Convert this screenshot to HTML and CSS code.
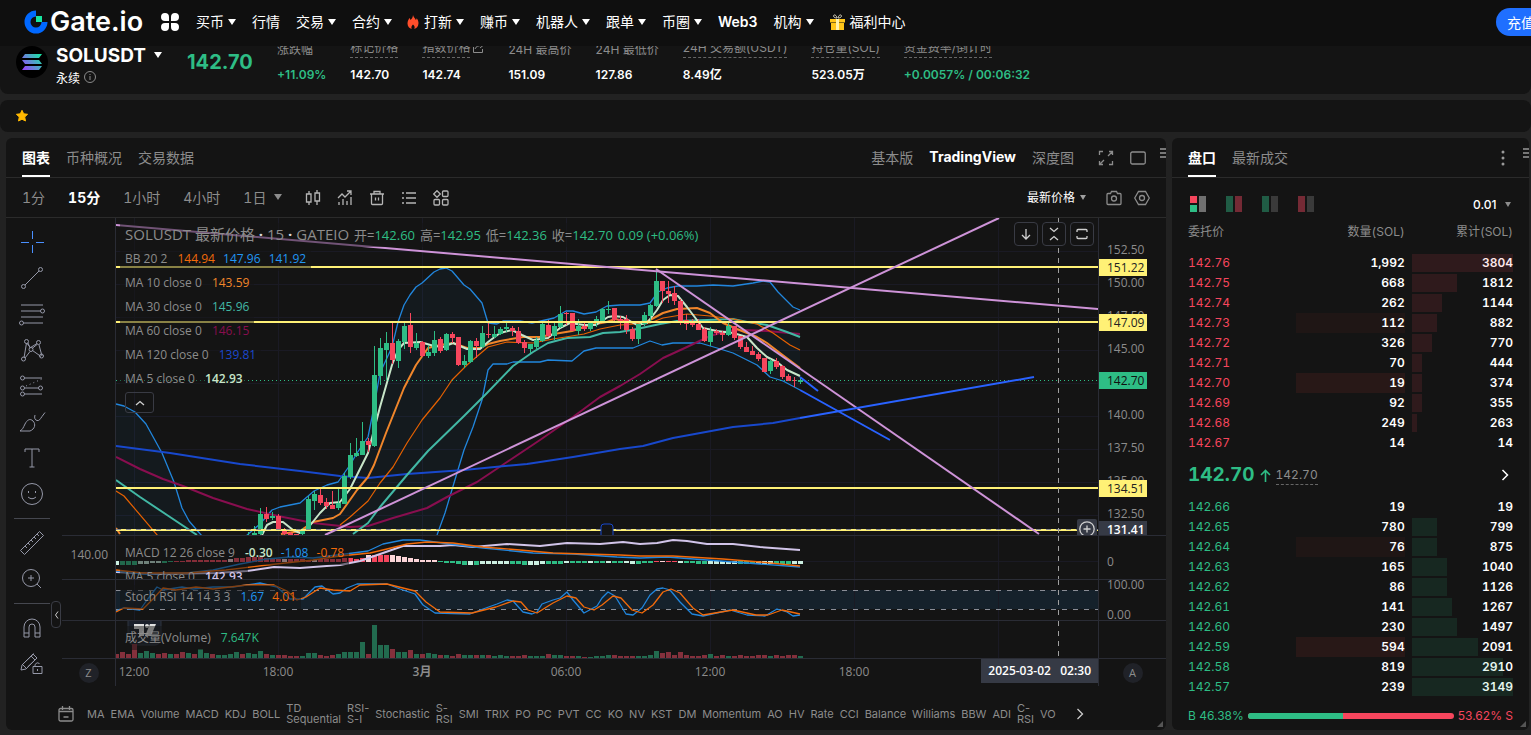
FILE: index.html
```html
<!DOCTYPE html>
<html lang="zh-CN">
<head>
    <meta charset="UTF-8">
    <meta name="viewport" content="width=device-width, initial-scale=1.0">
    <title>SOLUSDT 永续 - Gate.io</title>
    <link rel="stylesheet" href="styles.css">
</head>
<body>
    <header class="topbar">
        <a class="logo" href="#">
            <svg width="24" height="24" viewBox="0 0 24 24"><path d="M12 3.500A8.500 8.500 0 1 0 20.500 12" fill="none" stroke="#0068ff" stroke-width="6"/><path d="M12 6h6v6h-6z" fill="#17e6a1"/></svg>
            <span>Gate.io</span>
        </a>
        <button class="apps" type="button" aria-label="Apps">
            <svg width="18" height="18" viewBox="0 0 18 18" fill="#fff"><path d="M4 0a4 4 0 0 1 4 4v4H4a4 4 0 0 1 0-8zM14 0a4 4 0 0 1 0 8h-4V4a4 4 0 0 1 4-4zM4 10h4v4a4 4 0 1 1-4-4zM10 10h4a4 4 0 1 1-4 4z"/></svg>
        </button>
        <nav class="nav">
            <a class="menu" href="#">买币</a>
            <a href="#">行情</a>
            <a class="menu" href="#">交易</a>
            <a class="menu" href="#">合约</a>
            <a class="menu" href="#"><svg class="fire" width="12" height="14" viewBox="0 0 12 14"><path d="M6 0c.4 2.500 2.300 3.300 2.800 5 .6-.4.900-1 .9-1.700C11 4.800 11.500 6.500 11.500 8.200c0 3.200-2.200 5.300-4.200 5.700.8-1.500.2-3.200-1.300-4.300-1.400 1.100-2 2.800-1.300 4.300C2.500 13.400.5 11.400.5 8.400.5 6 1.800 4.700 2.200 3.100c.8.500 1.200 1.200 1.300 2C4.900 3.900 5.900 2.100 6 0z" fill="#ff4e2b"/></svg>打新</a>
            <a class="menu" href="#">赚币</a>
            <a class="menu" href="#">机器人</a>
            <a class="menu" href="#">跟单</a>
            <a class="menu" href="#">币圈</a>
            <a class="latin" href="#">Web3</a>
            <a class="menu" href="#">机构</a>
            <a href="#"><svg class="gift" width="15" height="16" viewBox="0 0 15 16"><path d="M7 4C4.500 4 3 2.700 3.700 1.400 4.800 0 6.800 2 7 4zm1 0c2.500 0 4-1.300 3.300-2.600C10.200 0 8.200 2 8 4z" fill="none" stroke="#d8d3c0"/><path d="M0 5h15v3.500H0zM1 9h13v7H1z" fill="#ffc61a"/><path d="M6 5h3v11H6z" fill="#fff2ac"/></svg>福利中心</a>
        </nav>
        <button class="deposit" type="button">充值</button>
    </header>

    <section class="ticker">
        <svg class="coin" width="32" height="32" viewBox="0 0 32 32">
            <defs><linearGradient id="sol" x1="6" y1="24" x2="26" y2="8" gradientUnits="userSpaceOnUse"><stop offset="0" stop-color="#a13bff"/><stop offset="1" stop-color="#12f0a0"/></linearGradient></defs>
            <circle cx="16" cy="16" r="16" fill="#000"/>
            <path d="M9 8h17l-3 4H6zM6 14h17l3 4H9zM9 20h17l-3 4H6z" fill="url(#sol)"/>
        </svg>
        <div class="pair">
            <button class="pair-name menu" type="button">SOLUSDT</button>
            <span class="pair-type">永续 <svg width="12" height="12" viewBox="0 0 12 12" fill="none" stroke="#8c8c8c"><circle cx="6" cy="6" r="5.500"/><path d="M6 5v4M6 3v1"/></svg></span>
        </div>
        <strong class="last-price">142.70</strong>
        <dl class="stats">
            <div><dt>涨跌幅</dt><dd class="up">+11.09%</dd></div>
            <div><dt class="hint">标记价格</dt><dd>142.70</dd></div>
            <div><dt><span class="hint">指数价格</span> <svg width="11" height="10" viewBox="0 0 11 10" fill="none" stroke="#8c8c8c"><path d="M.5 4v5.500h9V6M2 6c1-3 4-3.500 7-3.500M7 0l3 2.500L7 5"/></svg></dt><dd>142.74</dd></div>
            <div><dt>24H 最高价</dt><dd>151.09</dd></div>
            <div><dt>24H 最低价</dt><dd>127.86</dd></div>
            <div><dt class="hint">24H 交易额(USDT)</dt><dd>8.49亿</dd></div>
            <div><dt class="hint">持仓量(SOL)</dt><dd>523.05万</dd></div>
            <div><dt><span class="hint">资金费率/倒计时</span></dt><dd class="up">+0.0057% / 00:06:32</dd></div>
        </dl>
    </section>

    <section class="favorites">
        <svg width="12" height="12" viewBox="0 0 12 12"><path d="M6 .3l1.700 3.500 3.900.5-2.900 2.700.8 4L6 9.200 2.500 11l.8-4L.4 4.300l3.900-.5z" fill="#ffb800" stroke="#ffb800" stroke-linejoin="round"/></svg>
    </section>

    <main class="workspace">
        <section class="panel chart-panel">
            <div class="panel-head">
                <div class="tabs">
                    <button class="tab active" type="button">图表</button>
                    <button class="tab" type="button">币种概况</button>
                    <button class="tab" type="button">交易数据</button>
                </div>
                <div class="tabs">
                    <button class="tab" type="button">基本版</button>
                    <button class="tab selected" type="button">TradingView</button>
                    <button class="tab" type="button">深度图</button>
                </div>
                <div class="window-tools">
                    <button type="button" aria-label="Fullscreen"><svg width="16" height="16" viewBox="0 0 16 16"><path d="M1.500 5V1.500H5M11 1.500h3.500V5M14.500 11v3.500H11M5 14.500H1.500V11M10 6l4-4M6 10l-4 4"/></svg></button>
                    <button type="button" aria-label="Layout"><svg width="16" height="14" viewBox="0 0 16 14"><rect x=".75" y="1" width="14.500" height="12" rx="1.500"/></svg></button>
                </div>
                <span class="drag"></span>
            </div>

            <div class="toolbar">
                <button class="period" type="button">1分</button>
                <button class="period active" type="button">15分</button>
                <button class="period" type="button">1小时</button>
                <button class="period" type="button">4小时</button>
                <button class="period menu" type="button">1日</button>
                <div class="toolbar-icons">
                    <button type="button" aria-label="Candles"><svg width="16" height="16" viewBox="0 0 16 16"><path d="M4 1v3M4 12v3M12 0v3M12 11v4M1.500 4h4.500v8H1.500zM10 3h4.500v8H10z"/></svg></button>
                    <button type="button" aria-label="Indicators"><svg width="16" height="16" viewBox="0 0 16 16"><path d="M1 8l4-4 3 3 6-6M10 1h4v4M2 15v-3M6 15V9M10 15v-4M14 15V7"/></svg></button>
                    <button type="button" aria-label="Delete"><svg width="16" height="16" viewBox="0 0 16 16"><path d="M1 4h14M5 4V1.500h6V4M2.500 4v9.500q0 1 1 1h9q1 0 1-1V4M6.500 7.500v3M9.500 7.500v3"/></svg></button>
                    <button type="button" aria-label="Objects"><svg width="16" height="16" viewBox="0 0 16 16"><path d="M5 3h10M5 8h10M5 13h10M1 3h2M1 8h2M1 13h2"/></svg></button>
                    <button type="button" aria-label="Layouts"><svg width="16" height="16" viewBox="0 0 16 16"><path d="M4 .7L7.300 4 4 7.300.7 4z"/><rect x="9.500" y="1" width="5.500" height="5.500" rx="1"/><rect x="1" y="9.500" width="5.500" height="5.500" rx="1"/><rect x="9.500" y="9.500" width="5.500" height="5.500" rx="1"/></svg></button>
                </div>
                <label class="price-source"><select aria-label="Price source"><option>最新价格</option></select></label>
                <div class="toolbar-icons dim">
                    <button type="button" aria-label="Snapshot"><svg width="16" height="16" viewBox="0 0 16 16"><path d="M2 3.500h2.500L5.500 1.500h5l1 2H14q1 0 1 1v9q0 1-1 1H2q-1 0-1-1v-9q0-1 1-1z"/><circle cx="8" cy="8.500" r="2.500"/></svg></button>
                    <button type="button" aria-label="Settings"><svg width="16" height="16" viewBox="0 0 16 16"><path d="M4.500 1.500h7L15.300 8l-3.800 6.500h-7L.7 8z"/><circle cx="8" cy="8" r="2.500"/></svg></button>
                </div>
            </div>

            <div class="chart-body">
                <div class="draw-tools">
                    <button type="button" aria-label="Cross" class="on"><svg viewBox="0 0 28 28"><path d="M14.500 3v8M14.500 17v8M3 14.500h8M18 14.500h8"/></svg></button>
                    <button type="button" aria-label="Trend line"><svg viewBox="0 0 28 28"><path d="M7 21L21 7"/><circle cx="5.500" cy="22.500" r="2"/><circle cx="22.500" cy="5.500" r="2"/></svg></button>
                    <button type="button" aria-label="Fib retracement"><svg viewBox="0 0 28 28"><path d="M3 5h22M3 11h19.500M3 17h22M5.500 23H25"/><circle cx="24.500" cy="11" r="2"/><circle cx="3.500" cy="23" r="2"/></svg></button>
                    <button type="button" aria-label="Pattern"><svg viewBox="0 0 28 28"><path d="M6 22L8.500 7l4 4.500L19 7.500M21 9l3 11M7 22l5-6.500M14.500 14.500l8.500 6M14 12.500l5-4M10 7l2 5"/><circle cx="8.500" cy="5.500" r="2"/><circle cx="20.500" cy="6.500" r="2"/><circle cx="13" cy="13.500" r="2"/><circle cx="5.500" cy="23" r="2"/><circle cx="23.500" cy="20" r="2"/></svg></button>
                    <button type="button" aria-label="Projection"><svg viewBox="0 0 28 28"><path d="M6.500 6H24M6.500 16h14M6.500 22H24"/><path d="M8 14L24 7" stroke-dasharray="1 3"/><circle cx="4.500" cy="6" r="2"/><circle cx="4.500" cy="16" r="2"/><circle cx="22.500" cy="16" r="2"/><circle cx="4.500" cy="22" r="2"/></svg></button>
                    <button type="button" aria-label="Brush"><svg viewBox="0 0 28 28"><path d="M2 23h10c5-2 6-7 3-10s-6-1-8 3-2 5-5 7zM17 7c-1 3 0 5 2 5.500s3-1 5-4l3-4"/></svg></button>
                    <button type="button" aria-label="Text"><svg viewBox="0 0 28 28"><path d="M7 8V5h14v3M14 5v18M11.500 23h5"/></svg></button>
                    <button type="button" aria-label="Emoji"><svg viewBox="0 0 28 28"><circle cx="14" cy="14" r="10.500"/><path d="M10.500 11v2M17.500 11v2M10 17q4 3.500 8 0"/></svg></button>
                    <hr>
                    <button type="button" aria-label="Measure"><svg viewBox="0 0 28 28"><path d="M2.500 21.500l19-19 4 4-19 19zM7 17l2 2M10 14l2 2M13 11l2 2M16 8l2 2M19 5l2 2"/></svg></button>
                    <button type="button" aria-label="Zoom"><svg viewBox="0 0 28 28"><circle cx="13" cy="13" r="8.500"/><path d="M19 19l4 4M13 10v6M10 13h6"/></svg></button>
                    <hr>
                    <button type="button" aria-label="Magnet"><svg viewBox="0 0 28 28"><path d="M6 23V13a8 8 0 0 1 16 0v10h-5V13a3 3 0 0 0-6 0v10zM6 19h5M17 19h5"/></svg></button>
                    <button type="button" aria-label="Lock drawing"><svg viewBox="0 0 28 28"><path d="M3 20l1-5L15 4l4 4L8 19zM5 15l3 3M6 13L16 3.500M13 6l4 4M9.500 17L18 9"/><path d="M15 16.500h9v7h-9zM17 16.500v-2q2-3 4.500-1M19.500 19v2"/></svg></button>
                    <button type="button" class="collapse" aria-label="Hide toolbar"><svg width="5" height="8" viewBox="0 0 5 8"><path d="M4 0.500L1.500 4 4 7.500"/></svg></button>
                </div>

                <div class="panes">
                    <div class="pane">
                        <div class="axis-left"></div>
                        <div class="plot">
                            <svg class="canvas main-canvas" id="mainPlot"></svg>
                            <div class="legend">
                                <div class="legend-title">SOLUSDT 最新价格 <b>·</b> 15 <b>·</b> GATEIO <small>开=<i>142.60</i></small> <small>高=<i>142.95</i></small> <small>低=<i>142.36</i></small> <small>收=<i>142.70</i></small> <small><i>0.09 (+0.06%)</i></small></div>
                                <div class="legend-row">BB 20 2 <span class="c-mid">144.94</span> <span class="c-blue">147.96</span> <span class="c-blue">141.92</span></div>
                                <div class="legend-row">MA 10 close 0 <span class="c-ma10">143.59</span></div>
                                <div class="legend-row">MA 30 close 0 <span class="c-ma30">145.96</span></div>
                                <div class="legend-row">MA 60 close 0 <span class="c-ma60">146.15</span></div>
                                <div class="legend-row">MA 120 close 0 <span class="c-ma120">139.81</span></div>
                                <div class="legend-row">MA 5 close 0 <span class="c-ma5">142.93</span></div>
                                <button class="legend-toggle" type="button" aria-label="Collapse legend"><svg width="10" height="6" viewBox="0 0 10 6"><path d="M1 5l4-3.500L9 5"/></svg></button>
                            </div>
                            <div class="pane-buttons">
                                <button type="button" aria-label="Move pane down"><svg width="14" height="14" viewBox="0 0 14 14"><path d="M7 2v10M3 8l4 4 4-4"/></svg></button>
                                <button type="button" aria-label="Collapse pane"><svg width="14" height="14" viewBox="0 0 14 14"><path d="M3 1l4 3.500L11 1M3 13l4-3.500 4 3.500"/></svg></button>
                                <button type="button" aria-label="Maximize pane"><svg width="14" height="14" viewBox="0 0 14 14"><path d="M2 5V3.500q0-1 1-1h8q1 0 1 1V5M2 9v1.500q0 1 1 1h8q1 0 1-1V9"/></svg></button>
                            </div>
                            <button class="add-alert" type="button" aria-label="Add"><svg width="16" height="16" viewBox="0 0 16 16"><circle cx="8" cy="8" r="7.200"/><path d="M8 4.500v7M4.500 8h7"/></svg></button>
                        </div>
                        <svg class="axis-right main-canvas" id="mainAxis"></svg>
                    </div>
                    <div class="pane">
                        <div class="axis-left">140.00</div>
                        <div class="plot">
                            <svg class="canvas macd-canvas" id="macdPlot"></svg>
                            <div class="legend">
                                <div class="legend-row">MACD 12 26 close 9 <span class="c-ma5">-0.30</span> <span class="c-blue">-1.08</span> <span class="c-mid">-0.78</span></div>
                                <div class="legend-row">MA 5 close 0 <span class="c-purple">142.93</span></div>
                            </div>
                        </div>
                        <svg class="axis-right macd-canvas"><text x="8" y="30">0</text></svg>
                    </div>
                    <div class="pane">
                        <div class="axis-left"></div>
                        <div class="plot">
                            <svg class="canvas stoch-canvas" id="stochPlot"></svg>
                            <div class="legend">
                                <div class="legend-row">Stoch RSI 14 14 3 3 <span class="c-blue">1.67</span> <span class="c-mid">4.01</span></div>
                            </div>
                        </div>
                        <svg class="axis-right stoch-canvas"><text x="8" y="9">100.00</text><text x="8" y="39">0.00</text></svg>
                    </div>
                    <div class="pane">
                        <div class="axis-left"></div>
                        <div class="plot">
                            <svg class="canvas volume-canvas" id="volumePlot"></svg>
                            <div class="legend">
                                <div class="legend-row">成交量(Volume) <span class="c-up">7.647K</span></div>
                            </div>
                        </div>
                        <svg class="axis-right volume-canvas"></svg>
                    </div>
                    <div class="pane time-pane">
                        <div class="axis-left"><button class="round" type="button">Z</button></div>
                        <div class="plot">
                            <svg class="canvas time-canvas" id="timeAxis"></svg>
                            <div class="time-cursor">2025-03-02 &nbsp; 02:30</div>
                        </div>
                        <div class="axis-right"><button class="round" type="button">A</button></div>
                    </div>
                </div>
            </div>

            <div class="indicators">
                <button class="calendar" type="button" aria-label="Date range"><svg width="16" height="16" viewBox="0 0 16 16"><rect x="1" y="2.500" width="14" height="12.500" rx="1.500"/><path d="M1 5.500h14M4.500 0v4M11.500 0v4M5.500 11h5"/></svg></button>
                <button type="button">MA</button>
                <button type="button">EMA</button>
                <button type="button">Volume</button>
                <button type="button">MACD</button>
                <button type="button">KDJ</button>
                <button type="button">BOLL</button>
                <button type="button">TD<br>Sequential</button>
                <button type="button">RSI-<br>S-I</button>
                <button type="button">Stochastic</button>
                <button type="button">S-<br>RSI</button>
                <button type="button">SMI</button>
                <button type="button">TRIX</button>
                <button type="button">PO</button>
                <button type="button">PC</button>
                <button type="button">PVT</button>
                <button type="button">CC</button>
                <button type="button">KO</button>
                <button type="button">NV</button>
                <button type="button">KST</button>
                <button type="button">DM</button>
                <button type="button">Momentum</button>
                <button type="button">AO</button>
                <button type="button">HV</button>
                <button type="button">Rate</button>
                <button type="button">CCI</button>
                <button type="button">Balance</button>
                <button type="button">Williams</button>
                <button type="button">BBW</button>
                <button type="button">ADI</button>
                <button type="button">C-<br>RSI</button>
                <button type="button">VO</button>
                <button class="more" type="button" aria-label="More"><svg width="8" height="12" viewBox="0 0 8 12"><path d="M1.500 1l5 5-5 5"/></svg></button>
            </div>
            <span class="resize"></span>
        </section>

        <section class="panel book-panel">
            <div class="panel-head">
                <div class="tabs">
                    <button class="tab active" type="button">盘口</button>
                    <button class="tab" type="button">最新成交</button>
                </div>
                <button class="dots" type="button" aria-label="More"><svg width="4" height="16" viewBox="0 0 4 16" fill="#9a9a9a"><circle cx="2" cy="2" r="1.500"/><circle cx="2" cy="8" r="1.500"/><circle cx="2" cy="14" r="1.500"/></svg></button>
                <span class="drag"></span>
            </div>
            <div class="book-tools">
                <button type="button" aria-label="Both"><svg width="16" height="16"><path d="M0 0h7v7H0z" fill="#f6465d"/><path d="M0 9h7v7H0z" fill="#2ebd85"/><path d="M9 0h7v16H9z" fill="#707070"/></svg></button>
                <button type="button" aria-label="Side by side"><svg width="16" height="16"><path d="M0 0h7v16H0z" fill="#205c45"/><path d="M9 0h7v16H9z" fill="#752a35"/></svg></button>
                <button type="button" aria-label="Bids"><svg width="16" height="16"><path d="M0 0h7v16H0z" fill="#205c45"/><path d="M9 0h7v16H9z" fill="#3a3a3a"/></svg></button>
                <button type="button" aria-label="Asks"><svg width="16" height="16"><path d="M0 0h7v16H0z" fill="#752a35"/><path d="M9 0h7v16H9z" fill="#3a3a3a"/></svg></button>
                <label class="step"><select aria-label="Price step"><option>0.01</option></select></label>
            </div>
            <table class="book">
                <thead><tr><th>委托价</th><th>数量(SOL)</th><th>累计(SOL)</th></tr></thead>
                <tbody class="asks" id="asks"></tbody>
                <tbody>
                    <tr class="spread">
                        <td colspan="3">
                            <div class="spread-line">
                                <strong>142.70</strong>
                                <svg width="11" height="13" viewBox="0 0 11 13" fill="none" stroke="#2ebd85" stroke-width="1.600"><path d="M5.500 13V1.500M1 6l4.500-4.500L10 6"/></svg>
                                <span class="mark">142.70</span>
                                <svg class="go" width="8" height="12" viewBox="0 0 8 12" fill="none" stroke="#fff" stroke-width="1.500"><path d="M1.500 1l5 5-5 5"/></svg>
                            </div>
                        </td>
                    </tr>
                </tbody>
                <tbody class="bids" id="bids"></tbody>
            </table>
            <div class="ratio">
                <span class="up">B 46.38%</span>
                <div class="ratio-bar"><div class="ratio-buy" style="width: 46.38%"></div></div>
                <span class="down">53.62% S</span>
            </div>
            <span class="resize"></span>
        </section>
    </main>

    <script src="script.js"></script>
</body>
</html>
```

FILE: styles.css
```css
* {
    box-sizing: border-box;
}

body {
    margin: 0;
    background: #222;
    color: #fff;
    font-family: Inter, "Noto Sans CJK SC", sans-serif;
    font-size: 12px;
    overflow-x: hidden;
}

button, select {
    margin: 0;
    padding: 0;
    border: 0;
    background: none;
    color: inherit;
    font: inherit;
    cursor: pointer;
}

select {
    appearance: none;
    outline: none;
}

a {
    color: inherit;
    text-decoration: none;
}

svg {
    display: block;
    flex: none;
}

.up { color: #2ebd85; }
.down { color: #f6465d; }

/* small triangle behind anything that opens a list */
.menu::after,
.price-source::after,
.step::after {
    content: '';
    display: inline-block;
    flex: none;
    border: 4px solid transparent;
    border-top: 6px solid currentColor;
    border-bottom: 0;
    margin-left: 4px;
}

/* top bar */
.topbar {
    position: relative;
    z-index: 2;
    display: flex;
    align-items: center;
    height: 46px;
    padding: 0 0 2px 24px;
    background: #0f0f0f;
    overflow: hidden;
}

.logo {
    display: flex;
    align-items: center;
    gap: 2px;
    width: 121px;
    font-size: 27px;
    font-weight: 600;
    line-height: 44px;
}

.apps {
    margin: 0 17px 0 16px;
}

.nav {
    display: flex;
    gap: 16px;
    flex: 1;
    font-size: 14px;
    line-height: 44px;
    white-space: nowrap;
}

.nav a {
    display: flex;
    align-items: center;
}

.nav .latin {
    font-weight: 600;
}

.fire {
    margin-right: 5px;
    margin-left: -1px;
}

.gift {
    margin-right: 5px;
}

.deposit {
    flex: none;
    height: 28px;
    margin-right: -16px;
    padding: 0 12px 0 11px;
    border-radius: 14px;
    background: #1f6fff;
    font-size: 14px;
}

/* ticker, scrolled partly under the top bar */
.ticker {
    display: flex;
    align-items: flex-start;
    height: 64px;
    margin-top: -16px;
    padding: 16px 16px 0;
    background: #141414;
    border-radius: 0 0 8px 8px;
    white-space: nowrap;
}

.pair {
    width: 131px;
    margin-left: 8px;
}

.pair-name {
    display: flex;
    align-items: center;
    height: 18px;
    font-size: 19px;
    font-weight: 700;
}

.pair-name::after {
    margin-left: 8px;
}

.pair-type {
    display: flex;
    align-items: center;
    gap: 4px;
    height: 26px;
}

.last-price {
    width: 90px;
    font-size: 20px;
    line-height: 32px;
    color: #2ebd85;
}

.stats {
    display: flex;
    gap: 24px;
    margin: -8px 0 0;
}

.stats dt {
    display: flex;
    gap: 3px;
    align-items: center;
    height: 20px;
    color: #8c8c8c;
}

.stats .hint {
    height: 20px;
    line-height: 19px;
    border-bottom: 1px dashed #666;
}

.stats dd {
    margin: 6px 0 0;
    font-weight: 600;
    line-height: 22px;
}

.favorites {
    margin: 6px 0;
    padding: 10px 16px;
    background: #141414;
    border-radius: 8px;
}

/* two columns */
.workspace {
    display: flex;
    gap: 6px;
    padding: 0 2px 5px 6px;
}

.panel {
    position: relative;
    background: #141414;
    border-radius: 6px;
    overflow: hidden;
}

.chart-panel {
    flex: 1;
    min-width: 0;
}

.book-panel {
    flex: 0 0 357px;
}

.panel-head {
    display: flex;
    align-items: center;
    height: 40px;
    padding-left: 16px;
    border-bottom: 1px solid #2b2b2b;
    font-size: 14px;
}

.tabs {
    display: flex;
    gap: 16px;
}

.tabs:first-child {
    margin-right: auto;
}

.tab {
    height: 39px;
    color: #8c8c8c;
    padding-bottom: 2px;
    border-top: 2px solid transparent;
    border-bottom: 2px solid transparent;
}

.tab.active,
.tab.selected {
    color: #fff;
    font-weight: 700;
}

.tab.active {
    border-bottom-color: #fff;
}

.window-tools {
    display: flex;
    gap: 16px;
    margin: 0 14px 0 24px;
}

.window-tools svg,
.toolbar-icons svg,
.calendar svg,
.more svg {
    fill: none;
    stroke: #8c8c8c;
    stroke-width: 1.3;
}

.drag {
    width: 6px;
    height: 10px;
    margin-top: -10px;
    border-top: 2px solid #777;
    border-bottom: 2px solid #777;
    background: linear-gradient(#777, #777) 0 2px / 6px 2px no-repeat;
}

.dots {
    margin-right: 18px;
}

.toolbar {
    display: flex;
    align-items: center;
    height: 40px;
    padding: 0 16px;
    border-bottom: 1px solid #2b2b2b;
}

.period {
    display: flex;
    align-items: center;
    margin-right: 23px;
    padding-bottom: 2px;
    font-size: 14px;
    font-variant-numeric: tabular-nums;
    color: #8c8c8c;
}

.period.active {
    color: #fff;
    font-weight: 700;
}

.period.menu::after {
    margin-left: 8px;
}

.toolbar-icons {
    display: flex;
    gap: 16px;
}

.toolbar-icons svg {
    stroke: #b5b5b5;
}

.toolbar-icons.dim {
    gap: 12px;
}

.toolbar-icons.dim svg {
    stroke: #8c8c8c;
}

.price-source {
    display: flex;
    align-items: center;
    margin: 0 20px 0 auto;
}

.price-source::after {
    border-top-color: #a0a0a0;
    border-width: 5px 3px 0;
}

.chart-body {
    display: flex;
}

/* drawing tools */
.draw-tools {
    position: relative;
    flex: 0 0 56px;
    padding-top: 6px;
}

.draw-tools button {
    display: flex;
    align-items: center;
    width: 52px;
    height: 36px;
    padding-left: 12px;
}

.draw-tools button svg {
    width: 28px;
    height: 28px;
    fill: none;
    stroke: #9598a8;
}

.draw-tools .on svg {
    stroke: #4a90ff;
}

.draw-tools hr {
    width: 36px;
    height: 1px;
    margin: 6px 0 6px 8px;
    border: 0;
    background: #45474f;
}

.draw-tools .collapse {
    position: absolute;
    right: 1px;
    top: 383px;
    justify-content: center;
    width: 10px;
    height: 27px;
    padding: 0;
    border: 1px solid #3a3c45;
    border-radius: 4px;
}

.draw-tools .collapse svg {
    width: 5px;
    height: 8px;
    stroke: #ccc;
}

/* chart panes */
.panes {
    flex: 1;
    min-width: 0;
    font-family: "Open Sans", "Noto Sans CJK SC", sans-serif;
    color: #8c8c8c;
}

.pane {
    display: flex;
    border-bottom: 1px solid #2a2c35;
}

.axis-left {
    display: flex;
    align-items: center;
    justify-content: flex-end;
    flex: 0 0 54px;
    padding-right: 7px;
    border-right: 1px solid #2a2c35;
    padding-bottom: 6px;
}

.axis-right {
    width: 68px;
    border-left: 1px solid #2a2c35;
    font-size: 12px;
    fill: #8c8c8c;
}

.plot {
    position: relative;
    flex: 1;
    min-width: 0;
    overflow: hidden;
}

.canvas {
    width: 100%;
}

.main-canvas { height: 317px; }
.macd-canvas { height: 43px; }
.stoch-canvas { height: 40px; }
.volume-canvas { height: 37px; }
.time-canvas { height: 27px; }

.canvas path {
    fill: none;
    stroke-linejoin: round;
}

.canvas text {
    font-size: 12px;
    fill: #8c8c8c;
    text-anchor: middle;
}

.legend {
    position: absolute;
    left: 4px;
    top: 5px;
}

.legend-title,
.legend-row {
    width: fit-content;
    height: 24px;
    padding: 0 5px;
    line-height: 24px;
    white-space: nowrap;
    background: rgba(20, 20, 20, 0.5);
}

.legend-title {
    font-size: 15px;
    line-height: 22px;
}

.legend-title b {
    color: #ddd;
}

.legend small {
    margin-left: 1px;
    font-size: 13px;
}

.legend i {
    font-style: normal;
    color: #2ebd85;
}

.legend span {
    margin-left: 7px;
}

.legend span + span {
    margin-left: 5px;
}

.c-mid { color: #f26a0a; }
.c-blue { color: #2196f3; }
.c-ma10 { color: #f0862b; }
.c-ma30 { color: #42b8a5; }
.c-ma60 { color: #880e4f; }
.c-ma120 { color: #1b48cc; }
.c-ma5 { color: #c8e6c9; font-weight: 600; }
.c-purple { color: #d1c4e9; font-weight: 600; }
.c-up { color: #2ebd85; }

.legend-toggle {
    display: flex;
    align-items: center;
    justify-content: center;
    width: 29px;
    height: 21px;
    margin: 1px 0 0 5px;
    border: 1px solid #393b44;
    border-radius: 3px;
}

.legend-toggle svg,
.pane-buttons svg,
.add-alert svg {
    fill: none;
    stroke: #d0d0d0;
    stroke-width: 1.3;
}

.pane-buttons {
    position: absolute;
    right: 4px;
    top: 4px;
    display: flex;
    gap: 4px;
}

.pane-buttons button {
    display: flex;
    align-items: center;
    justify-content: center;
    width: 24px;
    height: 24px;
    border: 1px solid #393b44;
    border-radius: 4px;
    background: #141414;
}

.add-alert {
    position: absolute;
    right: 1px;
    bottom: -4px;
    padding: 2px;
    background: #363a45;
    border-radius: 2px 2px 0 0;
}

.time-pane {
    border-bottom: 0;
}

.time-pane .axis-left,
.time-pane .axis-right {
    display: flex;
    align-items: center;
    padding: 0;
    justify-content: center;
}

.round {
    width: 20px;
    height: 20px;
    border-radius: 50%;
    background: #202228;
    font-size: 11px;
}

.time-cursor {
    position: absolute;
    right: 0;
    top: 0;
    padding: 0 7px;
    background: #363a45;
    color: #fff;
    font-weight: 600;
    line-height: 24px;
}

/* indicator shortcuts */
.indicators {
    display: flex;
    align-items: center;
    gap: 6px;
    height: 44px;
    padding: 12px 0 0 52px;
    color: #8c8c8c;
    font-size: 11px;
    line-height: 11px;
}

.indicators button {
    flex: none;
    text-align: left;
}

.indicators .calendar {
    margin-right: 7px;
}

.indicators .more {
    margin-left: 14px;
}

.more svg {
    stroke: #ccc;
}

.resize {
    position: absolute;
    right: 3px;
    bottom: 3px;
    border: 3px solid #555;
    border-top-color: transparent;
    border-left-color: transparent;
}

/* order book */
.book-tools {
    display: flex;
    align-items: center;
    gap: 20px;
    height: 52px;
    padding: 0 18px;
}

.step {
    display: flex;
    align-items: center;
    margin-left: auto;
    font-weight: 500;
}

.step::after {
    margin-left: 8px;
    border-width: 5px 3px 0;
    border-top-color: #8c8c8c;
}

.book {
    width: calc(100% - 32px);
    margin: 0 16px;
    table-layout: fixed;
    border-collapse: collapse;
    font-variant-numeric: tabular-nums;
}

.book th {
    height: 23px;
    padding: 0 0 20px;
    color: #8c8c8c;
    font-weight: 400;
    line-height: 3px;
    text-align: right;
}

.book th:first-child {
    text-align: left;
}

.book td {
    height: 20px;
    padding: 0;
    line-height: 18px;
    text-align: right;
    font-weight: 600;
}

.book td:first-child {
    text-align: left;
    font-weight: 400;
}

.book td:last-child {
    padding-left: 7px;
}

.asks td:first-child { color: #f6465d; }
.bids td:first-child { color: #2ebd85; }

.flash {
    background: rgba(246, 70, 60, 0.09);
}

.flash-faint {
    background: rgba(246, 70, 60, 0.05);
}

.depth {
    position: relative;
    height: 18px;
}

.depth-bar {
    position: absolute;
    left: 0;
    top: 0;
    height: 18px;
}

.asks .depth-bar { background: rgba(246, 70, 93, 0.12); }
.bids .depth-bar { background: rgba(46, 189, 133, 0.12); }

.book .spread td {
    height: 44px;
    padding: 0;
}

.spread-line {
    display: flex;
    align-items: center;
    padding-right: 4px;
}

.spread-line strong {
    margin-right: 5px;
    font-size: 19px;
    color: #2ebd85;
}

.mark {
    margin-left: 5px;
    color: #8c8c8c;
    border-bottom: 1px dashed #666;
}

.go {
    margin-left: auto;
}

.ratio {
    display: flex;
    align-items: center;
    gap: 4px;
    height: 33px;
    padding: 4px 16px 0;
}

.ratio-bar {
    flex: 1;
    height: 6px;
    border-radius: 3px;
    background: #f6465d;
    overflow: hidden;
}

.ratio-buy {
    height: 6px;
    background: #2ebd85;
}
```

FILE: script.js
```javascript
const UP = "#2ebd85";
const DOWN = "#f6465d";
const STEP = 6;      // px per 15 minute bar
const ORIGIN = 18;   // x of the 12:00 bar

const barX = (i) => ORIGIN + i * STEP;
const rect = (x, y, w, h, fill, extra = "") => `<rect x="${x}" y="${y}" width="${w}" height="${h}" fill="${fill}" ${extra}/>`;
const path = (points, stroke, width, extra = "") => `<path d="M${points}" stroke="${stroke}" stroke-width="${width}" ${extra}/>`;
const vLines = (h) => [18, 162, 306, 450, 594, 738, 882].map((x) => path(`${x}.5 0V${h}`, "#1a1a24", 1)).join("");
const cursor = (h) => path(`942.5 0V${h}`, "#a0a0a0", 1, 'stroke-dasharray="5 5"');

// body top, body bottom, high, low, direction (1 = up), starting at bar 19
const candles = [
    [317,318,314,318,1],[315,318,308,318,1],[296,316,290,318,1],[296,301,289,304,0],[298,300,294,302,1],
    [298,311,296,312,0],[311,316,310,318,0],[315,318,314,318,0],[316,318,316,318,0],[312,316,310,318,1],
    [281,311,278,312,1],[276,283,273,292,1],[277,285,269,287,0],[284,288,280,291,0],[287,291,273,291,0],
    [285,290,270,292,1],[258,286,255,286,1],[237,259,225,261,1],[235,238,220,239,1],[223,237,204,237,1],
    [223,227,220,234,0],[157,228,128,229,1],[130,158,120,167,1],[125,132,114,162,1],[125,142,104,146,0],
    [123,143,121,150,1],[108,124,105,131,1],[107,129,95,135,0],[125,130,115,132,1],[124,138,123,139,0],
    [134,138,127,140,1],[122,135,113,138,1],[121,133,119,135,0],[116,132,115,133,1],[116,120,114,125,0],
    [119,147,119,148,0],[143,147,137,150,1],[123,144,122,145,1],[123,128,120,140,0],[115,129,108,130,1],
    [116,117,105,120,0],[116,119,108,120,1],[111,116,109,117,1],[109,111,103,114,1],[110,113,108,118,0],
    [113,125,109,126,0],[124,130,122,135,0],[126,131,126,135,1],[122,129,119,132,1],[106,123,103,124,1],
    [107,118,102,119,0],[108,118,104,122,1],[96,109,88,110,1],[95,96,94,107,0],[95,113,95,113,0],
    [108,113,101,117,1],[108,111,104,113,0],[104,111,103,113,1],[101,105,98,109,1],[91,103,90,103,1],
    [91,92,83,96,1],[90,102,90,104,0],[101,103,98,111,0],[101,112,97,116,0],[111,121,109,123,0],
    [106,121,106,126,1],[97,106,94,108,1],[87,98,86,103,1],[63,88,51,89,1],[63,73,63,85,0],
    [73,76,63,85,0],[75,83,68,87,0],[83,103,81,107,0],[102,106,96,112,0],[105,107,101,109,0],
    [106,112,101,112,0],[111,123,109,124,0],[113,124,109,128,1],[113,115,111,117,0],[115,117,113,123,0],
    [108,117,103,118,1],[108,120,108,122,0],[118,129,118,131,0],[129,134,124,134,0],[133,137,128,137,0],
    [136,141,134,143,0],[140,154,140,154,0],[143,153,141,156,1],[143,149,140,151,0],[148,159,147,161,0],
    [158,163,156,163,0],[162,163,159,169,0],[162,164,159,166,1]
];
const FIRST_CANDLE = 19;

const bbUpperLeft = "0,186 8,188 19,194 30,206 46,235 58,264 66,290 73,303 86,318";
const bbUpper = "130,318 144,306 156,292 164,289 184,285 198,273 211,267 222,264 234,247 241,235 252,219 258,189 264,155 276,129 282,104 288,87 294,77 300,69 306,65 318,54 324,51 330,50 336,53 348,67 354,71 366,85 372,105 381,106 387,103 404,103 416,105 438,100 450,93 457,93 468,96 480,94 491,88 504,87 524,87 534,85 542,74 551,70 562,68 581,68 597,67 617,68 637,65 647,63 654,64 662,74 677,89 684,92";
const bbLower = "321,317 329,295 341,255 348,232 357,209 366,182 372,152 377,146 391,146 397,144 424,144 432,142 456,143 468,133 480,130 517,130 534,123 546,127 557,125 584,125 601,130 617,135 641,147 654,159 667,163 684,172";
const bbMid = "224,307 234,299 252,283 264,265 277,249 291,225 306,202 324,180 336,162 351,147 372,129 391,124 417,125 437,121 468,116 484,111 504,107 534,105 547,100 571,96 594,98 617,101 641,106 657,115 674,127 684,132";
const ma5 = "146,317 151,307 157,304 167,304 177,312 184,315 192,310 204,295 214,285 224,284 234,271 240,259 252,235 258,212 264,189 276,147 282,132 288,125 304,124 318,128 327,129 337,125 351,131 364,131 372,124 384,115 396,112 406,117 417,122 432,120 444,110 454,105 468,107 480,107 492,99 498,98 507,99 521,107 531,105 541,92 547,82 554,77 562,78 571,89 587,110 601,113 617,115 631,119 641,130 651,139 661,144 671,152 684,158";
const ma10 = "165,316 184,313 197,304 217,300 224,296 241,272 252,259 258,247 270,215 288,170 300,147 312,130 324,127 337,125 351,130 364,130 372,126 384,123 407,119 424,119 438,116 456,113 474,107 491,104 499,101 517,105 532,103 547,95 561,91 581,90 594,95 607,105 621,111 641,119 651,125 664,135 684,150";
const ma30 = "237,316 252,305 264,289 291,257 312,233 348,198 371,175 397,148 417,134 432,125 451,120 474,119 487,115 504,114 521,111 544,106 561,103 591,102 617,101 631,104 651,107 671,114 684,119";
const ma60 = "0,239 24,251 47,261 67,268 97,280 131,291 162,298 197,305 234,309 252,308 277,300 311,290 331,279 361,264 391,244 424,222 457,199 484,179 504,168 524,156 547,140 571,129 594,118 611,113 627,112 651,113 684,116";
const ma120 = "0,228 54,235 124,246 184,253 224,258 252,260 291,256 348,252 411,246 457,239 504,231 527,228 557,220 617,209 657,205 684,200";

function drawMain() {
    let out = vLines(317);
    for (let y = 33; y < 317; y += 33) {
        out += path(`0 ${y}.5H2000`, "#1a1a24", 1);
    }
    const lowerBack = bbLower.split(" ").reverse().join(" ");
    out += `<polygon points="${bbUpperLeft} 0,318" fill="#2196f3" opacity=".05"/>`;
    out += `<polygon points="${bbUpper} ${lowerBack}" fill="#2196f3" opacity=".05"/>`;
    out += path(bbUpperLeft, "#2186dd", 1.3) + path(bbUpper, "#2186dd", 1.3) + path(bbLower, "#2186dd", 1.3);
    out += path(ma60, "#880e4f", 2) + path(ma120, "#1848cc", 2);
    out += path("0,262 24,279 51,297 81,317", "#42b8a5", 2) + path(ma30, "#42b8a5", 2);
    out += path("0,273 8,278 42,318", "#e66100", 1.2) + path(bbMid, "#e66100", 1.2);
    out += path("0,310 4,316", "#f0862b", 2) + path(ma10, "#f0862b", 2);
    out += path(ma5, "#c8e6c9", 2);
    candles.forEach(([top, bottom, high, low, up], i) => {
        const x = barX(FIRST_CANDLE + i);
        const color = up ? UP : DOWN;
        out += rect(x, high, 1, low - high, color) + rect(x - 2, top, 5, bottom - top, color);
    });
    // price lines
    [49, 104, 270, 312].forEach((y) => {
        out += path(`0 ${y}H2000`, "#fff176", 2);
    });
    out += path("0 162.5H2000", UP, 1, 'stroke-dasharray="1 3"');
    // trend lines
    out += path("0,7 982,91", "#ce93d8", 2) + path("209,317 883,0", "#ce93d8", 2) + path("540,51 923,316", "#ce93d8", 2);
    out += path("684,159 702,173", "#2962ff", 2) + path("684,172 774,222", "#2962ff", 2) + path("684,200 918,159", "#2962ff", 2);
    out += path("0 311.5H2000", "#8c8c8c", 1, 'stroke-dasharray="5 5"') + cursor(317);
    out += rect(485, 306, 12, 14, "#141414", 'rx="3" stroke="#1848cc"');
    document.getElementById("mainPlot").innerHTML = out;

    let axis = "";
    for (let i = 0; i < 9; i++) {
        axis += `<text x="8" y="${36 + i * 33}">${(152.5 - i * 2.5).toFixed(2)}</text>`;
    }
    const tags = [[49, "151.22", "#fff176", "#222"], [104, "147.09", "#fff176", "#222"], [162, "142.70", UP, "#111"], [270, "134.51", "#fff176", "#222"], [311, "131.41", "#363a45", "#fff"]];
    tags.forEach(([y, text, bg, color]) => {
        const weight = color === "#fff" ? 600 : 400;
        axis += rect(0, y - 8, 48, 17, bg) + `<text x="8" y="${y + 5}" fill="${color}" font-weight="${weight}">${text}</text>`;
    });
    document.getElementById("mainAxis").innerHTML = axis;
}

function drawMacd() {
    // height and shade of every bar, from bar -3
    const hist = [-4,-4,-4,-4,-3,-3,-2,-2,-2,-1,1,1,2,2,2,2,2,2,2,3,4,4,5,5,5,4,4,3,3,3,3,3,2,2,3,3,3,3,4,4,3,4,7,7,7,7,7,6,5,4,3,2,2,2,
        -1,-2,-2,-3,-4,-4,-4,-3,-3,-3,-3,-3,-3,-3,-4,-4,-4,-3,-3,-3,-3,-2,-2,-2,-2,-2,-2,-2,-2,-2,-2,-2,-3,-3,-2,-2,1,1,1,1,-2,-2,-2,-3,-3,-3,-3,-3,-3,-3,-3,-3,-3,-3,-3,-3,-3,-3,-3,-3,-3];
    const pale = new Set([-3, 1, 2, 3, 4, 16, 25, 30, 39, 43, 44, 45, 46, 47, 48, 49, 50, 56, 58, 59, 60, 61, 62, 66, 67, 68, 72, 76, 79, 82, 83, 88, 91, 96, 97, 98, 99, 100, 104, 105, 106, 110, 111]);
    let out = vLines(43) + path("0 25.5H2000", "#1a1a24", 1);
    hist.forEach((v, i) => {
        const bar = i - 3;
        const color = v > 0 ? (pale.has(bar) ? "#fcd5d8" : DOWN) : (pale.has(bar) ? "#ccefe1" : UP);
        out += rect(barX(bar) - 2, v > 0 ? 26 - v : 25, 5, Math.abs(v), color);
    });
    out += path("0,36 40,38 100,37 131,35 158,31 184,32 224,29 244,25 267,17 287,10 324,10 337,9 357,11 391,8 424,10 451,7 484,8 507,6 524,8 541,7 557,4 571,5 591,8 617,8 644,11 684,14", "#d1c4e9", 2);
    out += path("0,35 27,38 71,37 97,34 124,28 151,23 174,21 197,22 237,17 252,15 267,8 287,4 304,4 334,8 367,12 397,15 417,17 457,18 501,21 524,22 551,21 591,24 644,28 684,31", "#2186dd", 1.3);
    out += path("0,34 27,37 71,37 110,34 151,29 197,24 224,20 254,17 271,13 291,8 311,6 337,7 367,11 404,14 437,17 504,19 524,20 557,20 607,23 644,26 684,30", "#f26a0a", 1.3);
    document.getElementById("macdPlot").innerHTML = out + cursor(43);
}

function drawStoch() {
    let out = rect(0, 10, "100%", 19, "#15212b") + vLines(40);
    out += path("0 10.5H2000", "#8a8d96", 1, 'stroke-dasharray="5 6"') + path("0 29.5H2000", "#8a8d96", 1, 'stroke-dasharray="5 6"');
    out += path("0,31 7,28 24,30 31,20 41,7 47,10 66,7 77,9 97,7 117,7 144,3 161,7 174,19 187,19 199,7 206,6 217,14 224,13 231,8 241,4 271,4 284,9 299,14 307,25 319,33 354,34 367,29 381,24 391,20 397,21 407,32 416,34 421,32 426,24 437,20 444,18 451,12 457,20 468,33 481,26 486,18 492,12 499,16 510,34 517,35 526,28 534,15 541,9 547,8 554,10 564,22 576,34 587,36 614,30 631,35 649,36 661,29 671,32 677,36 684,35", "#2186dd", 1.3);
    out += path("0,32 8,28 27,29 37,19 47,8 60,10 80,7 97,9 131,5 158,5 171,11 181,20 190,17 204,8 217,10 234,11 244,5 271,4 299,11 310,22 324,32 356,33 380,27 397,21 405,22 412,30 421,33 437,23 451,16 460,18 468,27 478,30 486,25 497,16 505,18 516,30 526,33 537,25 547,12 555,9 564,13 577,28 587,35 617,30 640,35 652,35 666,30 684,34", "#f26a0a", 1.3);
    document.getElementById("stochPlot").innerHTML = out + cursor(40);
}

function drawVolume() {
    // bars -3 .. 18 have no candle on screen, so their direction is listed
    const early = "0000111001001011011110";
    const heights = [4,6,4,14,5,7,5,4,5,4,4,6,5,4,9,5,4,3,3,4,6,4,5,4,7,4,3,3,3,2,2,2,5,5,3,2,3,4,6,6,6,16,4,33,13,13,9,6,6,8,4,4,5,4,3,3,2,4,3,3,3,3,3,2,3,2,2,2,3,2,2,2,4,3,3,2,2,2,1,1,2,2,3,3,2,2,2,2,2,3,7,5,6,3,6,3,2,2,3,4,2,3,2,2,3,2,2,3,3,2,3,2,3,3,2];
    let out = vLines(37);
    // TradingView badge
    out += rect(12, -8, 33, 32, "#1b202b", 'rx="6" stroke="#2f3541"');
    out += '<polygon points="18,3 28,3 28,15 23,15 23,8 18,8" fill="#e0e0e0"/><polygon points="34,3 40,3 35,15 29,15" fill="#e0e0e0"/><circle cx="31" cy="5" r="2" fill="#e0e0e0"/>';
    heights.forEach((h, i) => {
        const bar = i - 3;
        const candle = candles[bar - FIRST_CANDLE];
        const up = candle ? candle[4] : early[i] === "1";
        out += rect(barX(bar) - 2, 37 - h, 5, h, up ? "#226b4f" : "#84303c");
    });
    document.getElementById("volumePlot").innerHTML = out + cursor(37);
}

function drawTime() {
    const labels = ["12:00", "18:00", "3月", "06:00", "12:00", "18:00"];
    document.getElementById("timeAxis").innerHTML = labels.map((t, i) =>
        `<text x="${18 + i * 144}" y="17"${t === "3月" ? ' font-weight="600"' : ""}>${t}</text>`).join("");
}

// price, amount, total, depth %, highlight class
const asks = [
    ["142.76", "1,992", 3804, 100], ["142.75", "668", 1812, 45], ["142.74", "262", 1144, 30],
    ["142.73", "112", 882, 25, "flash-faint"], ["142.72", "326", 770, 20], ["142.71", "70", 444, 10],
    ["142.70", "19", 374, 10, "flash"], ["142.69", "92", 355, 10], ["142.68", "249", 263, 5],
    ["142.67", "14", 14, 0]
];
const bids = [
    ["142.66", "19", 19, 0], ["142.65", "780", 799, 25], ["142.64", "76", 875, 25, "flash-faint"],
    ["142.63", "165", 1040, 35], ["142.62", "86", 1126, 35], ["142.61", "141", 1267, 40],
    ["142.60", "230", 1497, 45], ["142.59", "594", 2091, 65, "flash"], ["142.58", "819", 2910, 90],
    ["142.57", "239", 3149, 100]
];

function fillBook(id, rows) {
    document.getElementById(id).innerHTML = rows.map(([price, amount, total, depth, flash = ""]) => `
        <tr>
            <td>${price}</td>
            <td class="${flash}">${amount}</td>
            <td><div class="depth"><div class="depth-bar" style="width: ${depth}%"></div>${total}</div></td>
        </tr>`).join("");
}

drawMain();
drawMacd();
drawStoch();
drawVolume();
drawTime();
fillBook("asks", asks);
fillBook("bids", bids);
```
